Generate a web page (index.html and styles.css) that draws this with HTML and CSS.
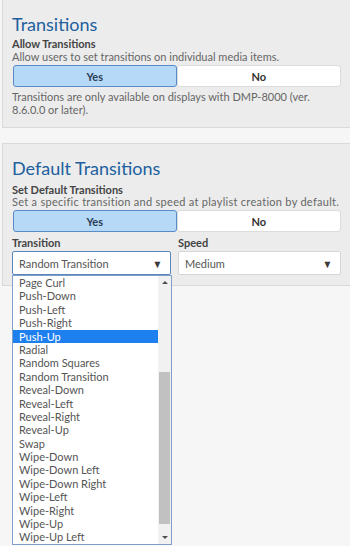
FILE: index.html
```html
<!DOCTYPE html>
<html>
<head>
<meta charset="utf-8">
<link rel="stylesheet" href="styles.css">
</head>
<body>
<div class="page">
  <section class="panel p1">
    <h2 class="title">Transitions</h2>
    <div class="label">Allow Transitions</div>
    <div class="desc">Allow users to set transitions on individual media items.</div>
    <div class="toggle">
      <button class="opt on">Yes</button>
      <button class="opt">No</button>
    </div>
    <p class="note">Transitions are only available on displays with DMP-8000 (ver.<br>8.6.0.0 or later).</p>
  </section>

  <section class="panel p2">
    <h2 class="title">Default Transitions</h2>
    <div class="label">Set Default Transitions</div>
    <div class="desc">Set a specific transition and speed at playlist creation by default.</div>
    <div class="toggle">
      <button class="opt on">Yes</button>
      <button class="opt">No</button>
    </div>
    <div class="fields">
      <div class="field">
        <div class="label">Transition</div>
        <div class="select focus"><span>Random Transition</span><span class="arrow">&#9660;</span></div>
        <div class="dropdown">
          <ul class="items">
            <li>Page Curl</li>
            <li>Push-Down</li>
            <li>Push-Left</li>
            <li>Push-Right</li>
            <li class="sel">Push-Up</li>
            <li>Radial</li>
            <li>Random Squares</li>
            <li>Random Transition</li>
            <li>Reveal-Down</li>
            <li>Reveal-Left</li>
            <li>Reveal-Right</li>
            <li>Reveal-Up</li>
            <li>Swap</li>
            <li>Wipe-Down</li>
            <li>Wipe-Down Left</li>
            <li>Wipe-Down Right</li>
            <li>Wipe-Left</li>
            <li>Wipe-Right</li>
            <li>Wipe-Up</li>
            <li>Wipe-Up Left</li>
          </ul>
          <div class="scrollbar">
            <span class="sb-arrow up"></span>
            <div class="track"><div class="thumb"></div></div>
            <span class="sb-arrow down"></span>
          </div>
        </div>
      </div>
      <div class="field">
        <div class="label">Speed</div>
        <div class="select"><span>Medium</span><span class="arrow">&#9660;</span></div>
      </div>
    </div>
  </section>
</div>
</body>
</html>
```

FILE: styles.css
```css
* { box-sizing: border-box; }
html, body {
  margin: 0;
  padding: 0;
  background: #f6f6f6;
  height: 100%;
  overflow: hidden;
}
body {
  font-family: Lato, "Open Sans", sans-serif;
  font-size: 11px;
  color: #555;
}
.page {
  display: flex;
  flex-direction: column;
  gap: 15px;
}
.panel {
  margin-left: 2px;
  background: #ececec;
  border: 1px solid #d9d9d9;
  border-right: none;
  padding: 0 9px 0 9px;
}
.p1 {
  border-top: none;
  padding-top: 13px;
  padding-bottom: 9px;
  height: 128px;
}
.p2 {
  padding-top: 13px;
  height: 143px;
}
.title {
  margin: 0;
  font-weight: normal;
  font-size: 18px;
  line-height: 22px;
  color: #215f9f;
}
.label {
  font-weight: bold;
  color: #444;
  line-height: 13px;
  margin-top: 2px;
}
.desc {
  line-height: 13px;
  color: #666;
}
.toggle {
  display: grid;
  grid-template-columns: 1fr 1fr;
  margin-top: 2px;
  height: 22px;
}
.opt {
  font-family: inherit;
  font-size: 11px;
  font-weight: bold;
  color: #333;
  background: #fff;
  border: 1px solid #dcdcdc;
  border-radius: 3px;
  padding: 0;
  margin: 0;
}
.opt.on {
  background: #b7d9f8;
  border: 1.5px solid #5a8bc9;
  color: #2b3f57;
  margin-left: 1px;
}
.note {
  margin: 3px 0 0;
  line-height: 13px;
  color: #666;
}
.p2 .label { margin-top: 4px; }
.p2 .desc { margin-top: -1px; letter-spacing: 0.28px; }
.p2 .toggle { margin-top: 2px; }
.fields {
  display: grid;
  grid-template-columns: 159px 1fr;
  column-gap: 7px;
  margin-top: 2px;
}
.field { position: relative; }
.field .label { margin-top: 2px; margin-bottom: 2px; }
.select {
  height: 24px;
  background: #fff;
  border: 1px solid #d6d6d6;
  border-radius: 2px;
  display: flex;
  align-items: center;
  justify-content: space-between;
  padding: 0 7px 0 6px;
  color: #555;
}
.select.focus { border-color: #5b86bd; }
.arrow {
  font-size: 11px;
  color: #3a3a3a;
  transform: scaleX(0.9);
}
.dropdown {
  position: absolute;
  top: 100%;
  left: 0;
  width: 160px;
  height: 270px;
  background: #fff;
  border: 1px solid #7f9fc7;
  display: flex;
  z-index: 2;
}
.items {
  list-style: none;
  margin: 0;
  padding: 0;
  flex: 1;
}
.items li {
  height: 13.4px;
  line-height: 13.4px;
  padding-left: 6px;
  color: #555;
  white-space: nowrap;
}
.items li.sel {
  background: #1e80ef;
  color: #fff;
}
.scrollbar {
  width: 13px;
  background: #f1f1f1;
  display: flex;
  flex-direction: column;
  align-items: center;
}
.sb-arrow {
  width: 0;
  height: 0;
  border-left: 3px solid transparent;
  border-right: 3px solid transparent;
  margin: 5px 0;
}
.sb-arrow.up { border-bottom: 3px solid #505050; }
.sb-arrow.down { border-top: 3px solid #505050; }
.track {
  flex: 1;
  width: 100%;
  position: relative;
}
.thumb {
  position: absolute;
  left: 1px;
  right: 1px;
  top: 83px;
  height: 152px;
  background: #c1c1c1;
}
```
